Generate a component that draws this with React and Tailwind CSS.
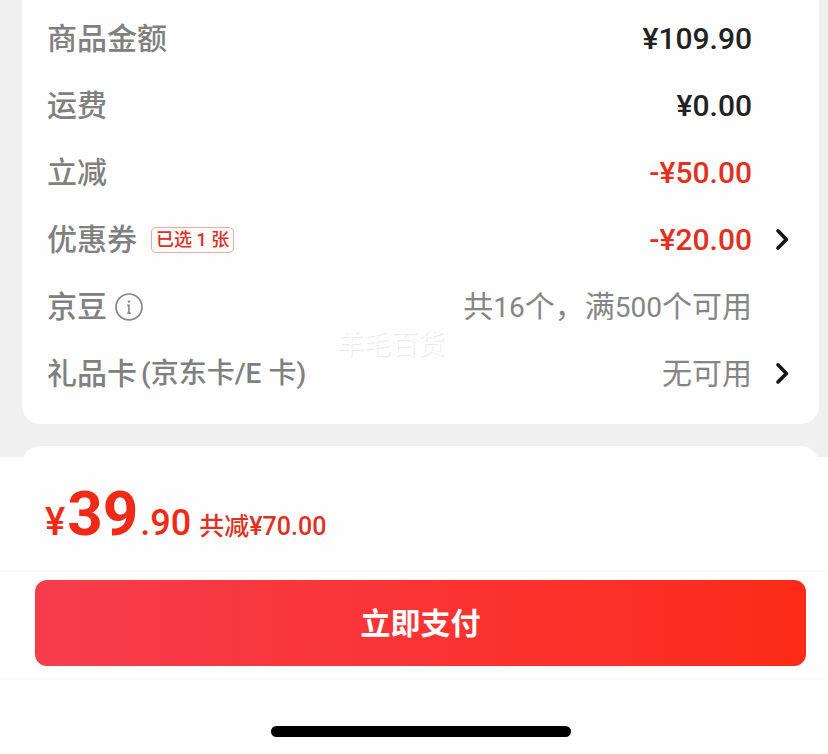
import React from 'react';

const ChevronIcon = () => (
  <svg
    viewBox="0 0 14 24"
    className="h-6 w-3.5"
    fill="none"
    stroke="#161616"
    strokeWidth="3.6"
    strokeLinecap="round"
    strokeLinejoin="round"
    aria-hidden="true"
  >
    <path d="M2 2.8 L10.4 11.4 L2 20" />
  </svg>
);

const InfoIcon = () => (
  <svg
    viewBox="0 0 28 28"
    className="size-7"
    fill="none"
    stroke="#858585"
    aria-hidden="true"
  >
    <circle cx="14" cy="14" r="13" strokeWidth="1.7" />
    <path d="M12.2 12.4 H14 V20.2 M12.2 20.2 H15.8" strokeWidth="1.6" />
    <circle cx="14" cy="8.6" r="1.2" fill="#858585" stroke="none" />
  </svg>
);

const Row = ({ label, children, onOpen }) => (
  <div className="flex h-[67px] items-center justify-between">
    <dt className="flex items-center text-[30px] font-medium text-[#808080]">
      {label}
    </dt>

    <dd className="flex items-center">
      {children}

      <span className="flex w-[38px] justify-end">
        {onOpen && (
          <button type="button" aria-label="查看" onClick={onOpen}>
            <ChevronIcon />
          </button>
        )}
      </span>
    </dd>
  </div>
);

const Amount = ({ children, discount }) => (
  <span
    className={
      discount
        ? 'text-[30px] font-medium text-[#e1301f]'
        : 'text-[30px] font-medium text-[#222222]'
    }
  >
    {children}
  </span>
);

const Digits = ({ children }) => (
  <span className="text-[28px]">{children}</span>
);

export default function App() {
  const open = () => {};

  return (
    <main className="flex min-h-screen flex-col bg-[#fefefe] font-[Roboto,'Noto_Sans_CJK_SC',sans-serif]">
      <div className="bg-[#f0f0f0] pr-[9px] pl-[22px]">
        <section className="relative rounded-b-[18px] bg-[#fefefe] pt-[5px] pr-[29px] pb-[17px] pl-[25px]">
          <dl>
            <Row label="商品金额">
              <Amount>¥109.90</Amount>
            </Row>

            <Row label="运费">
              <Amount>¥0.00</Amount>
            </Row>

            <Row label="立减">
              <Amount discount>-¥50.00</Amount>
            </Row>

            <Row
              onOpen={open}
              label={
                <>
                  优惠券
                  <span className="ml-3.5 flex h-[26px] items-center rounded-[5px] border border-[#eda9a4] bg-[#fffafa] px-1 text-lg font-medium text-[#d92f25]">
                    已选 1 张
                  </span>
                </>
              }
            >
              <Amount discount>-¥20.00</Amount>
            </Row>

            <Row
              label={
                <>
                  京豆
                  <button type="button" aria-label="京豆说明" className="ml-2">
                    <InfoIcon />
                  </button>
                </>
              }
            >
              <span className="text-[30px] text-[#858585]">
                共<Digits>16</Digits>个，满<Digits>500</Digits>个可用
              </span>
            </Row>

            <Row
              onOpen={open}
              label={
                <>
                  礼品卡
                  <span className="ml-1 text-[28px]">(京东卡/E 卡)</span>
                </>
              }
            >
              <span className="text-[30px] text-[#858585]">无可用</span>
            </Row>
          </dl>

          <span className="pointer-events-none absolute top-[325px] left-[315px] text-[27px] whitespace-nowrap text-white [text-shadow:1px_1px_1px_#e8e8e8]">
            羊毛百货
          </span>
        </section>

        {/* top edge of the next card, cut off by the footer */}
        <div className="mt-[22px] h-[11px] overflow-hidden">
          <div className="h-10 rounded-t-[18px] bg-[#fefefe]" />
        </div>
      </div>

      <footer>
        <p className="flex h-[114px] items-baseline px-[45px] pt-2.5 text-[#f02a17]">
          <span className="text-[38px] font-medium">¥</span>
          <strong className="ml-0.5 text-[62px] font-bold">39</strong>
          <span className="ml-0.5 text-[36px] font-medium">.90</span>
          <span className="ml-2 text-[25px] font-medium text-[#dc3223]">
            共减¥70.00
          </span>
        </p>

        <div className="border-y border-[#f8f8f8] pt-2 pr-[22px] pb-3 pl-[35px]">
          <button
            type="button"
            className="h-[86px] w-full rounded-xl bg-linear-to-r from-[#f63c4c] via-[#fa3434] to-[#fc2b17] text-[30px] font-bold text-white"
          >
            立即支付
          </button>
        </div>

        <div className="pt-[47px] pr-[22px] pb-4 pl-[35px]">
          <div className="mx-auto h-[11px] w-[300px] rounded-full bg-black" />
        </div>
      </footer>
    </main>
  );
}
